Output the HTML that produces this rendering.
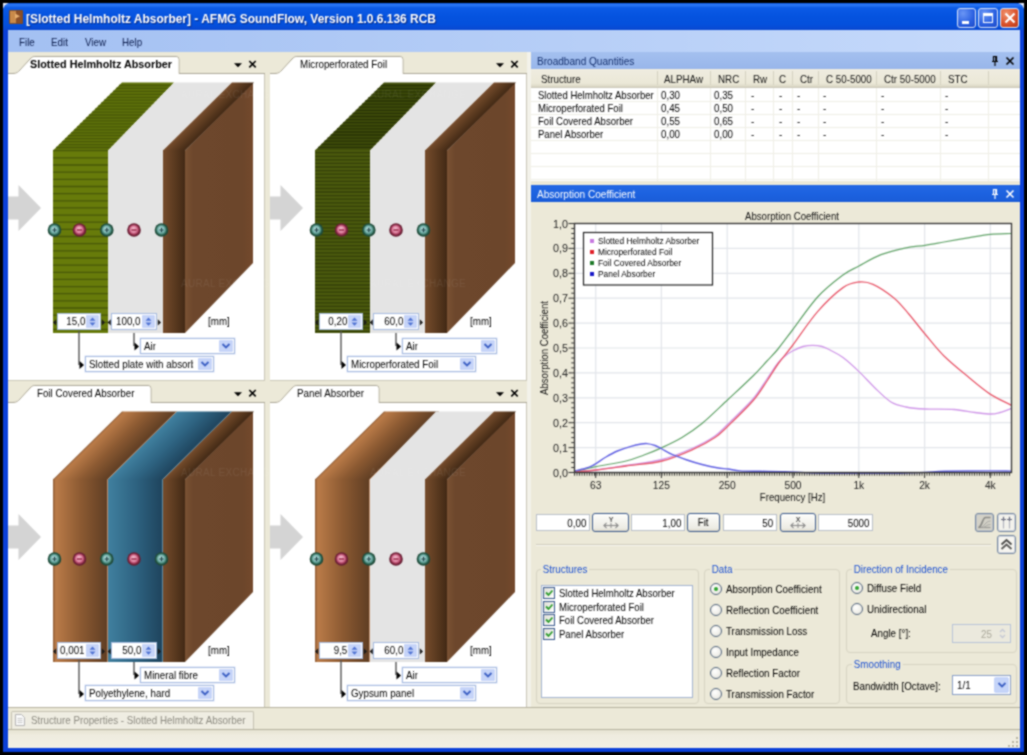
<!DOCTYPE html>
<html lang="en"><head><meta charset="utf-8"><title>AFMG SoundFlow</title>
<style>
*{box-sizing:border-box;margin:0;padding:0}
html,body{width:1027px;height:755px;overflow:hidden;background:#000}
body{position:relative;font-family:"Liberation Sans","DejaVu Sans",sans-serif;font-size:11px;color:#000;line-height:1}
#root{position:absolute;left:0;top:0;width:1027px;height:755px;overflow:hidden;background:#000;filter:url(#soft)}
.a{position:absolute}
.t{position:absolute;white-space:nowrap;line-height:12px;height:12px;transform-origin:0 50%;transform:scaleX(.89)}
.t.r{transform-origin:100% 50%}
#win{left:3px;top:3px;width:1021px;height:749px;background:#0a3fd8;border-radius:8px 8px 0 0;overflow:hidden}
#title{left:0;top:0;width:1021px;height:27px;background:linear-gradient(#0a5ae8 0,#2f7af5 7%,#0b5ae6 18%,#0553df 50%,#0450dc 80%,#0a48d0 100%)}
#ttext{left:23px;top:8px;font-weight:bold;font-size:13px;color:#fff;line-height:15px;height:15px;text-shadow:1px 1px 1px #0a2a80;transform:scaleX(.92)}
.wb{top:5px;width:20px;height:20px;border:1px solid #dfe8fb;border-radius:3px;background:radial-gradient(circle at 30% 25%,#6a96f5,#2a5fe0 60%,#1f4cc8)}
#menu{left:5px;top:27px;width:1012px;height:23px;background:linear-gradient(90deg,#a3c0f2,#c6dafb)}
#client{left:5px;top:49px;width:1012px;height:696px;background:#ece9d8}
.mi{top:6px;color:#0b1c4c}
.strip{background:#ece9d8;height:22px}
.doc{background:#fff}
.tabt{top:7px;line-height:12px}
.hdr{height:17px}
.hdr .t{top:3px;left:5.500px;transform:scaleX(.915)}
.sp{height:17px;background:#fff;border:1px solid #a6bbe0}
.sp .v{position:absolute;right:15px;top:1px;line-height:12px;font-size:11px;transform-origin:100% 50%;transform:scaleX(.89);white-space:nowrap}
.sp .b{position:absolute;right:1px;top:1px;width:13px;height:13px;background:#c6d4f8;border-radius:1px}
.cb{height:16px;background:#fff;border:1px solid #a6bbe0;box-shadow:0 0 0 .5px rgba(214,224,245,.9)}
.cb .v{position:absolute;left:3px;top:1px;line-height:12px;height:12px;font-size:11px;transform-origin:0 50%;transform:scaleX(.89);white-space:nowrap;overflow:hidden}
.cb .b{position:absolute;right:1px;top:1px;width:14px;height:12px;background:#c6d4f8;border-radius:1px}
.in{height:17px;background:#fff;border:1px solid #b9bfc9}
.in span{position:absolute;right:3px;top:2px;line-height:12px;font-size:11px;transform-origin:100% 50%;transform:scaleX(.89)}
.btn{height:19px;border:1px solid #3c5a8c;border-radius:3px;background:linear-gradient(#fdfdfb,#ecebe3 85%,#d8d4c6);text-align:center;line-height:16px;font-size:11px}
.gb{border:1px solid #d6d3c2;border-radius:4px}
.gl{color:#1a4fd0;background:#ece9d8;padding:0 2px;line-height:12px;height:12px;font-size:11px;white-space:nowrap;transform-origin:0 50%;transform:scaleX(.89)}
.rd{width:12px;height:12px;border-radius:50%;border:1px solid #52657d;background:radial-gradient(circle at 40% 35%,#fff,#e4e2d8)}
.rd.on::after{content:"";position:absolute;left:3px;top:3px;width:4px;height:4px;border-radius:50%;background:#2ea32e}
.ck{width:12px;height:12px;border:1px solid #38588c;background:linear-gradient(135deg,#dcdcd4,#fff)}
</style></head>
<body>
<div id="root">
<div class="a" style="left:3px;top:3px;width:6px;height:6px;background:#e8eefc"></div><div class="a" style="left:1018px;top:3px;width:6px;height:6px;background:#e8eefc"></div>
<div id="win" class="a">
<div id="title" class="a"><svg class="a" style="left:6px;top:7px" width="14" height="14" viewBox="0 0 14 16" preserveAspectRatio="none"><rect x="0" y="0" width="14" height="16" rx="1" fill="#7a4a2a"/><rect x="1" y="1" width="6" height="14" fill="#c98a4a"/><rect x="7" y="1" width="6" height="14" fill="#8a4f28"/><path d="M6 4l5 3-5 3z" fill="#e8b070"/></svg><div id="ttext" class="t">[Slotted Helmholtz Absorber] - AFMG SoundFlow, Version 1.0.6.136 RCB</div><div class="a wb" style="left:954px;width:19px"><div class="a" style="left:4px;top:12px;width:7px;height:3px;background:#fff"></div></div><div class="a wb" style="left:975px"><div class="a" style="left:4px;top:4px;width:10px;height:10px;border:1px solid #fff;border-top-width:3px"></div></div><div class="a wb" style="left:996.500px;width:19px;background:radial-gradient(circle at 30% 25%,#f0906a,#d8502a 60%,#b83a18)"><svg class="a" style="left:3px;top:3px" width="12" height="12" viewBox="0 0 12 12"><path d="M1.5 1.5l9 9M10.500 1.500l-9 9" stroke="#fff" stroke-width="2.200"/></svg></div></div>
<div id="menu" class="a"><div class="t mi" style="left:11px">File</div><div class="t mi" style="left:43px">Edit</div><div class="t mi" style="left:77px">View</div><div class="t mi" style="left:114px">Help</div></div>
<div id="client" class="a"></div>
</div>
<svg width="0" height="0" class="a"><defs>
<filter id="soft" x="0" y="0" width="1" height="1" color-interpolation-filters="sRGB"><feConvolveMatrix order="3" kernelMatrix="1 2 1 2 6 2 1 2 1" divisor="18" edgeMode="duplicate" preserveAlpha="true"/></filter>
<radialGradient id="gp" cx="0.500" cy="0.500" r="0.500" fx="0.450" fy="0.420"><stop offset="0" stop-color="#c8e8e4"/><stop offset="0.450" stop-color="#84bcb8"/><stop offset="0.700" stop-color="#3f7f70"/><stop offset="0.800" stop-color="#235240"/><stop offset="1" stop-color="#1d4636"/></radialGradient>
<radialGradient id="gm" cx="0.500" cy="0.500" r="0.500" fx="0.450" fy="0.420"><stop offset="0" stop-color="#f8ccda"/><stop offset="0.450" stop-color="#e088a4"/><stop offset="0.700" stop-color="#a83a5c"/><stop offset="0.800" stop-color="#74243a"/><stop offset="1" stop-color="#621c30"/></radialGradient>
<linearGradient id="cuF" x1="0" x2="1" y1="0" y2="0"><stop offset="0" stop-color="#8e5c36"/><stop offset="0.050" stop-color="#ba7b48"/><stop offset="0.500" stop-color="#8c5a32"/><stop offset="1" stop-color="#5e3d23"/></linearGradient>
<linearGradient id="cuT" x1="0" x2="1" y1="0" y2="0"><stop offset="0" stop-color="#b8743f"/><stop offset="0.500" stop-color="#a96a3a"/><stop offset="1" stop-color="#7c4a26"/></linearGradient>
<linearGradient id="blF" x1="0" x2="1" y1="0" y2="0"><stop offset="0" stop-color="#40809f"/><stop offset="0.500" stop-color="#2e6381"/><stop offset="1" stop-color="#1e435c"/></linearGradient>
<linearGradient id="blT" x1="0" x2="1" y1="0" y2="0"><stop offset="0" stop-color="#3a7796"/><stop offset="0.500" stop-color="#2f6785"/><stop offset="1" stop-color="#234e66"/></linearGradient>
<linearGradient id="brB" gradientUnits="userSpaceOnUse" x1="177" x2="245" y1="0" y2="0"><stop offset="0" stop-color="#7a5233"/><stop offset="0.120" stop-color="#6d472c"/><stop offset="0.850" stop-color="#6c462b"/><stop offset="1" stop-color="#74492c"/></linearGradient>
<linearGradient id="brS" gradientUnits="userSpaceOnUse" x1="155" x2="177" y1="0" y2="0"><stop offset="0" stop-color="#764c2c"/><stop offset="0.500" stop-color="#5c3b20"/><stop offset="1" stop-color="#422915"/></linearGradient>
<linearGradient id="brT" gradientUnits="userSpaceOnUse" x1="190" x2="206" y1="30" y2="46"><stop offset="0" stop-color="#7c5030"/><stop offset="0.5" stop-color="#66401f"/><stop offset="1" stop-color="#462a14"/></linearGradient>
</defs></svg>
<div class="a strip" style="left:8px;top:52px;width:257px;height:22px;"></div><div class="a doc" style="left:8px;top:74px;width:257px;height:306px;border-right:1px solid #c9c6b6;border-left:1px solid #fff"></div><svg class="a" style="left:8px;top:52px" width="257" height="23" viewBox="0 0 257 23"><path d="M0 21.500H5C9 21.500 10 20 12 18L22 7C24 5 25 4.500 28 4.500H168Q171 4.500 171 7.500V21.500H257" fill="none" stroke="#aca899" stroke-width="1"/><path d="M5 22C9 22 10 20.500 12.500 18L22.500 7.500C24 5.500 25.500 5 28 5H168Q170.5 5 170.5 7.500V23H0V22z" fill="#fff"/><path d="M226 11.200h8l-4 4z" fill="#000"/><path d="M241.300 9l6.400 6.400M247.700 9l-6.400 6.400" stroke="#000" stroke-width="1.600"/></svg><div class="t tabt" style="left:30px;top:58px;font-weight:bold;transform:scaleX(.983);">Slotted Helmholtz Absorber</div><svg class="a" style="left:8px;top:74px" width="257" height="306" viewBox="0 0 257 306"><path d="M45 76.5L114 8.5H166L100 76.5z" fill="#5f7209"/><rect x="45" y="75.9" width="55" height="183.1" fill="#677b0a"/><path d="M45 76.7H100M45 83.9H100M45 91.0H100M45 98.2H100M45 105.3H100M45 112.5H100M45 119.6H100M45 126.8H100M45 133.9H100M45 141.1H100M45 148.2H100M45 155.4H100M45 162.5H100M45 169.7H100M45 176.8H100M45 184.0H100M45 191.1H100M45 198.3H100M45 205.4H100M45 212.6H100M45 219.7H100M45 226.9H100M45 234.0H100M45 241.2H100M45 248.3H100M45 255.5H100" stroke="#485808" stroke-width="1.300" fill="none"/><path d="M48.0 73.5H102.9M51.0 70.6H105.7M54.0 67.6H108.6M57.0 64.7H111.5M60.0 61.7H114.3M63.0 58.8H117.2M66.0 55.8H120.1M69.0 52.8H123.0M72.0 49.9H125.8M75.0 46.9H128.7M78.0 44.0H131.6M81.0 41.0H134.4M84.0 38.1H137.3M87.0 35.1H140.2M90.0 32.2H143.0M93.0 29.2H145.9M96.0 26.2H148.8M99.0 23.3H151.7M102.0 20.3H154.5M105.0 17.4H157.4M108.0 14.4H160.3M111.0 11.5H163.1" stroke="#485808" stroke-width="1.300" fill="none"/><path d="M100 76.5L166 8.5H224L155 76.5V259H100z" fill="#e4e4e4"/><path d="M155 75.9H177V259H155z" fill="url(#brS)"/><path d="M177 76.5L245 8.5V189L177 259z" fill="url(#brB)"/><rect x="155" y="8.5" width="22" height="68.0" fill="url(#brS)" transform="translate(0,76.5) skewX(-45.42) translate(0,-76.5)"/><g transform="translate(0,111)"><path d="M0 11.500H10.500V0L33 23 10.500 46V34.500H0z" fill="#d4d4d4"/></g><circle cx="46.5" cy="156" r="6.800" fill="url(#gp)"/><path d="M44.3 156h4.400M46.5 153.8v4.400" stroke="#1d4348" stroke-width="1.200"/><circle cx="71.5" cy="156" r="6.800" fill="url(#gm)"/><path d="M68.9 156h5.200" stroke="#9a2a4a" stroke-width="1.500"/><circle cx="98.8" cy="156" r="6.800" fill="url(#gp)"/><path d="M96.6 156h4.400M98.8 153.8v4.400" stroke="#1d4348" stroke-width="1.200"/><circle cx="126" cy="156" r="6.800" fill="url(#gm)"/><path d="M123.4 156h5.200" stroke="#9a2a4a" stroke-width="1.500"/><circle cx="153.5" cy="156" r="6.800" fill="url(#gp)"/><path d="M151.3 156h4.400M153.5 153.8v4.400" stroke="#1d4348" stroke-width="1.200"/><path d="M71 257V291" stroke="#555" stroke-width="1.400" fill="none"/><path d="M71.500 287l4.500 4-4.500 4z" fill="#000"/><path d="M126 259V272" stroke="#555" stroke-width="1.400" fill="none"/><path d="M126.500 268.500l4.500 4-4.500 4z" fill="#000"/><path d="M48.200 245.300v6.200l-3.200-3.100zM93.800 245.300v6.200l3.200-3.100zM102.800 245.300v6.200l-3.200-3.100zM149.800 245.300v6.200l3.200-3.100z" fill="#1a1a1a"/></svg><div class="a sp" style="left:57px;top:313px;width:44px"><span class="v">15,0</span><span class="b"></span><svg class="a" style="right:2px;top:2px" width="11" height="11" viewBox="0 0 11 11"><path d="M2.500 4.700L5.500 1.500 8.500 4.700zM2.500 6.500L5.500 9.700 8.500 6.500z" fill="#4c70d2"/></svg></div><div class="a sp" style="left:111px;top:313px;width:46px"><span class="v">100,0</span><span class="b"></span><svg class="a" style="right:2px;top:2px" width="11" height="11" viewBox="0 0 11 11"><path d="M2.500 4.700L5.500 1.500 8.500 4.700zM2.500 6.500L5.500 9.700 8.500 6.500z" fill="#4c70d2"/></svg></div><div class="t" style="left:208px;top:315px">[mm]</div><div class="a cb" style="left:140px;top:338px;width:95px"><span class="v" style="">Air</span><span class="b"></span><svg class="a" style="right:3px;top:3px" width="10" height="8" viewBox="0 0 10 8"><path d="M1.500 2L5 5.500 8.500 2" fill="none" stroke="#3b5fc4" stroke-width="1.800"/></svg></div><div class="a cb" style="left:85px;top:356px;width:129px"><span class="v" style="width:117px;">Slotted plate with absorber</span><span class="b"></span><svg class="a" style="right:3px;top:3px" width="10" height="8" viewBox="0 0 10 8"><path d="M1.500 2L5 5.500 8.500 2" fill="none" stroke="#3b5fc4" stroke-width="1.800"/></svg></div>
<div class="a strip" style="left:270px;top:52px;width:257px;height:22px;"></div><div class="a doc" style="left:270px;top:74px;width:257px;height:306px;border-right:1px solid #c9c6b6;border-left:1px solid #fff"></div><svg class="a" style="left:270px;top:52px" width="257" height="23" viewBox="0 0 257 23"><path d="M0 21.500H5C9 21.500 10 20 12 18L22 7C24 5 25 4.500 28 4.500H130Q133 4.500 133 7.500V21.500H257" fill="none" stroke="#aca899" stroke-width="1"/><path d="M5 22C9 22 10 20.500 12.500 18L22.500 7.500C24 5.500 25.500 5 28 5H130Q132.5 5 132.5 7.500V23H0V22z" fill="#fff"/><path d="M226 11.200h8l-4 4z" fill="#000"/><path d="M241.300 9l6.400 6.400M247.700 9l-6.400 6.400" stroke="#000" stroke-width="1.600"/></svg><div class="t tabt" style="left:299.5px;top:58px;">Microperforated Foil</div><svg class="a" style="left:270px;top:74px" width="257" height="306" viewBox="0 0 257 306"><path d="M45 76.5L114 8.5H166L100 76.5z" fill="#3f4c0a"/><rect x="45" y="75.9" width="55" height="183.1" fill="#4b5a0d"/><path d="M45 78.7H100M45 82.3H100M45 85.9H100M45 89.4H100M45 93.0H100M45 96.6H100M45 100.2H100M45 103.7H100M45 107.3H100M45 110.9H100M45 114.5H100M45 118.0H100M45 121.6H100M45 125.2H100M45 128.8H100M45 132.3H100M45 135.9H100M45 139.5H100M45 143.0H100M45 146.6H100M45 150.2H100M45 153.8H100M45 157.3H100M45 160.9H100M45 164.5H100M45 168.1H100M45 171.6H100M45 175.2H100M45 178.8H100M45 182.4H100M45 185.9H100M45 189.5H100M45 193.1H100M45 196.7H100M45 200.2H100M45 203.8H100M45 207.4H100M45 211.0H100M45 214.5H100M45 218.1H100M45 221.7H100M45 225.3H100M45 228.8H100M45 232.4H100M45 236.0H100M45 239.6H100M45 243.1H100M45 246.7H100M45 250.3H100M45 253.9H100M45 257.4H100" stroke="#344008" stroke-width="1.300" fill="none"/><path d="M48.1 73.4H103.0M51.3 70.3H106.0M54.4 67.2H109.0M57.5 64.1H112.0M60.7 61.0H115.0M63.8 58.0H118.0M67.0 54.9H121.0M70.1 51.8H124.0M73.2 48.7H127.0M76.4 45.6H130.0M79.5 42.5H133.0M82.6 39.4H136.0M85.8 36.3H139.0M88.9 33.2H142.0M92.0 30.1H145.0M95.2 27.0H148.0M98.3 24.0H151.0M101.5 20.9H154.0M104.6 17.8H157.0M107.7 14.7H160.0M110.9 11.6H163.0" stroke="#273205" stroke-width="1.300" fill="none"/><path d="M100 76.5L166 8.5H224L155 76.5V259H100z" fill="#e4e4e4"/><path d="M155 75.9H177V259H155z" fill="url(#brS)"/><path d="M177 76.5L245 8.5V189L177 259z" fill="url(#brB)"/><rect x="155" y="8.5" width="22" height="68.0" fill="url(#brS)" transform="translate(0,76.5) skewX(-45.42) translate(0,-76.5)"/><g transform="translate(0,111)"><path d="M0 11.500H10.500V0L33 23 10.500 46V34.500H0z" fill="#d4d4d4"/></g><circle cx="46.5" cy="156" r="6.800" fill="url(#gp)"/><path d="M44.3 156h4.400M46.5 153.8v4.400" stroke="#1d4348" stroke-width="1.200"/><circle cx="71.5" cy="156" r="6.800" fill="url(#gm)"/><path d="M68.9 156h5.200" stroke="#9a2a4a" stroke-width="1.500"/><circle cx="98.8" cy="156" r="6.800" fill="url(#gp)"/><path d="M96.6 156h4.400M98.8 153.8v4.400" stroke="#1d4348" stroke-width="1.200"/><circle cx="126" cy="156" r="6.800" fill="url(#gm)"/><path d="M123.4 156h5.200" stroke="#9a2a4a" stroke-width="1.500"/><circle cx="153.5" cy="156" r="6.800" fill="url(#gp)"/><path d="M151.3 156h4.400M153.5 153.8v4.400" stroke="#1d4348" stroke-width="1.200"/><path d="M71 257V291" stroke="#555" stroke-width="1.400" fill="none"/><path d="M71.500 287l4.500 4-4.500 4z" fill="#000"/><path d="M126 259V272" stroke="#555" stroke-width="1.400" fill="none"/><path d="M126.500 268.500l4.500 4-4.500 4z" fill="#000"/><path d="M48.200 245.300v6.200l-3.200-3.100zM93.800 245.300v6.200l3.200-3.100zM102.800 245.300v6.200l-3.200-3.100zM149.800 245.300v6.200l3.200-3.100z" fill="#1a1a1a"/></svg><div class="a sp" style="left:319px;top:313px;width:44px"><span class="v">0,20</span><span class="b"></span><svg class="a" style="right:2px;top:2px" width="11" height="11" viewBox="0 0 11 11"><path d="M2.500 4.700L5.500 1.500 8.500 4.700zM2.500 6.500L5.500 9.700 8.500 6.500z" fill="#4c70d2"/></svg></div><div class="a sp" style="left:373px;top:313px;width:46px"><span class="v">60,0</span><span class="b"></span><svg class="a" style="right:2px;top:2px" width="11" height="11" viewBox="0 0 11 11"><path d="M2.500 4.700L5.500 1.500 8.500 4.700zM2.500 6.500L5.500 9.700 8.500 6.500z" fill="#4c70d2"/></svg></div><div class="t" style="left:470px;top:315px">[mm]</div><div class="a cb" style="left:402px;top:338px;width:95px"><span class="v" style="">Air</span><span class="b"></span><svg class="a" style="right:3px;top:3px" width="10" height="8" viewBox="0 0 10 8"><path d="M1.500 2L5 5.500 8.500 2" fill="none" stroke="#3b5fc4" stroke-width="1.800"/></svg></div><div class="a cb" style="left:347px;top:356px;width:129px"><span class="v" style="">Microperforated Foil</span><span class="b"></span><svg class="a" style="right:3px;top:3px" width="10" height="8" viewBox="0 0 10 8"><path d="M1.500 2L5 5.500 8.500 2" fill="none" stroke="#3b5fc4" stroke-width="1.800"/></svg></div>
<div class="a strip" style="left:8px;top:380px;width:257px;height:23px;border-top:1px solid #cbc8b8;"></div><div class="a doc" style="left:8px;top:403px;width:257px;height:304px;border-right:1px solid #c9c6b6;border-left:1px solid #fff"></div><svg class="a" style="left:8px;top:381px" width="257" height="23" viewBox="0 0 257 23"><path d="M0 21.500H5C9 21.500 10 20 12 18L22 7C24 5 25 4.500 28 4.500H140Q143 4.500 143 7.500V21.500H257" fill="none" stroke="#aca899" stroke-width="1"/><path d="M5 22C9 22 10 20.500 12.500 18L22.500 7.500C24 5.500 25.500 5 28 5H140Q142.5 5 142.5 7.500V23H0V22z" fill="#fff"/><path d="M226 11.200h8l-4 4z" fill="#000"/><path d="M241.300 9l6.400 6.400M247.700 9l-6.400 6.400" stroke="#000" stroke-width="1.600"/></svg><div class="t tabt" style="left:37px;top:387px;">Foil Covered Absorber</div><svg class="a" style="left:8px;top:403px" width="257" height="304" viewBox="0 0 257 304"><rect x="45" y="8.5" width="55" height="68.0" fill="url(#cuF)" transform="translate(0,76.5) skewX(-45.42) translate(0,-76.5)"/><rect x="45" y="75.9" width="55" height="183.1" fill="url(#cuF)"/><path d="M99.5 259V76.5L168.5 8.5" stroke="#d9a27a" stroke-width="1" fill="none" opacity="0.800"/><rect x="100" y="8.5" width="55" height="68.0" fill="url(#blF)" transform="translate(0,76.5) skewX(-45.42) translate(0,-76.5)"/><rect x="100" y="75.9" width="55" height="183.1" fill="url(#blF)"/><path d="M154.5 259V76.5L223.5 8.5" stroke="#6fa3bd" stroke-width="1" fill="none" opacity="0.800"/><path d="M155 75.9H177V259H155z" fill="url(#brS)"/><path d="M177 76.5L245 8.5V189L177 259z" fill="url(#brB)"/><rect x="155" y="8.5" width="22" height="68.0" fill="url(#brS)" transform="translate(0,76.5) skewX(-45.42) translate(0,-76.5)"/><g transform="translate(0,111)"><path d="M0 11.500H10.500V0L33 23 10.500 46V34.500H0z" fill="#d4d4d4"/></g><circle cx="46.5" cy="156" r="6.800" fill="url(#gp)"/><path d="M44.3 156h4.400M46.5 153.8v4.400" stroke="#1d4348" stroke-width="1.200"/><circle cx="71.5" cy="156" r="6.800" fill="url(#gm)"/><path d="M68.9 156h5.200" stroke="#9a2a4a" stroke-width="1.500"/><circle cx="98.8" cy="156" r="6.800" fill="url(#gp)"/><path d="M96.6 156h4.400M98.8 153.8v4.400" stroke="#1d4348" stroke-width="1.200"/><circle cx="126" cy="156" r="6.800" fill="url(#gm)"/><path d="M123.4 156h5.200" stroke="#9a2a4a" stroke-width="1.500"/><circle cx="153.5" cy="156" r="6.800" fill="url(#gp)"/><path d="M151.3 156h4.400M153.5 153.8v4.400" stroke="#1d4348" stroke-width="1.200"/><path d="M71 257V291" stroke="#555" stroke-width="1.400" fill="none"/><path d="M71.500 287l4.500 4-4.500 4z" fill="#000"/><path d="M126 259V272" stroke="#555" stroke-width="1.400" fill="none"/><path d="M126.500 268.500l4.500 4-4.500 4z" fill="#000"/><path d="M48.200 245.300v6.200l-3.200-3.100zM93.800 245.300v6.200l3.200-3.100zM102.800 245.300v6.200l-3.200-3.100zM149.800 245.300v6.200l3.200-3.100z" fill="#1a1a1a"/></svg><div class="a sp" style="left:57px;top:642px;width:44px"><span class="v">0,001</span><span class="b"></span><svg class="a" style="right:2px;top:2px" width="11" height="11" viewBox="0 0 11 11"><path d="M2.500 4.700L5.500 1.500 8.500 4.700zM2.500 6.500L5.500 9.700 8.500 6.500z" fill="#4c70d2"/></svg></div><div class="a sp" style="left:111px;top:642px;width:46px"><span class="v">50,0</span><span class="b"></span><svg class="a" style="right:2px;top:2px" width="11" height="11" viewBox="0 0 11 11"><path d="M2.500 4.700L5.500 1.500 8.500 4.700zM2.500 6.500L5.500 9.700 8.500 6.500z" fill="#4c70d2"/></svg></div><div class="t" style="left:208px;top:644px">[mm]</div><div class="a cb" style="left:140px;top:667px;width:95px"><span class="v" style="">Mineral fibre</span><span class="b"></span><svg class="a" style="right:3px;top:3px" width="10" height="8" viewBox="0 0 10 8"><path d="M1.500 2L5 5.500 8.500 2" fill="none" stroke="#3b5fc4" stroke-width="1.800"/></svg></div><div class="a cb" style="left:85px;top:685px;width:129px"><span class="v" style="">Polyethylene, hard</span><span class="b"></span><svg class="a" style="right:3px;top:3px" width="10" height="8" viewBox="0 0 10 8"><path d="M1.500 2L5 5.500 8.500 2" fill="none" stroke="#3b5fc4" stroke-width="1.800"/></svg></div>
<div class="a strip" style="left:270px;top:380px;width:257px;height:23px;border-top:1px solid #cbc8b8;"></div><div class="a doc" style="left:270px;top:403px;width:257px;height:304px;border-right:1px solid #c9c6b6;border-left:1px solid #fff"></div><svg class="a" style="left:270px;top:381px" width="257" height="23" viewBox="0 0 257 23"><path d="M0 21.500H5C9 21.500 10 20 12 18L22 7C24 5 25 4.500 28 4.500H106Q109 4.500 109 7.500V21.500H257" fill="none" stroke="#aca899" stroke-width="1"/><path d="M5 22C9 22 10 20.500 12.500 18L22.500 7.500C24 5.500 25.500 5 28 5H106Q108.5 5 108.5 7.500V23H0V22z" fill="#fff"/><path d="M226 11.200h8l-4 4z" fill="#000"/><path d="M241.300 9l6.400 6.400M247.700 9l-6.400 6.400" stroke="#000" stroke-width="1.600"/></svg><div class="t tabt" style="left:297px;top:387px;">Panel Absorber</div><svg class="a" style="left:270px;top:403px" width="257" height="304" viewBox="0 0 257 304"><rect x="45" y="8.5" width="55" height="68.0" fill="url(#cuF)" transform="translate(0,76.5) skewX(-45.42) translate(0,-76.5)"/><rect x="45" y="75.9" width="55" height="183.1" fill="url(#cuF)"/><path d="M99.5 259V76.5L168.5 8.5" stroke="#d9a27a" stroke-width="1" fill="none" opacity="0.800"/><path d="M100 76.5L166 8.5H224L155 76.5V259H100z" fill="#e4e4e4"/><path d="M155 75.9H177V259H155z" fill="url(#brS)"/><path d="M177 76.5L245 8.5V189L177 259z" fill="url(#brB)"/><rect x="155" y="8.5" width="22" height="68.0" fill="url(#brS)" transform="translate(0,76.5) skewX(-45.42) translate(0,-76.5)"/><g transform="translate(0,111)"><path d="M0 11.500H10.500V0L33 23 10.500 46V34.500H0z" fill="#d4d4d4"/></g><circle cx="46.5" cy="156" r="6.800" fill="url(#gp)"/><path d="M44.3 156h4.400M46.5 153.8v4.400" stroke="#1d4348" stroke-width="1.200"/><circle cx="71.5" cy="156" r="6.800" fill="url(#gm)"/><path d="M68.9 156h5.200" stroke="#9a2a4a" stroke-width="1.500"/><circle cx="98.8" cy="156" r="6.800" fill="url(#gp)"/><path d="M96.6 156h4.400M98.8 153.8v4.400" stroke="#1d4348" stroke-width="1.200"/><circle cx="126" cy="156" r="6.800" fill="url(#gm)"/><path d="M123.4 156h5.200" stroke="#9a2a4a" stroke-width="1.500"/><circle cx="153.5" cy="156" r="6.800" fill="url(#gp)"/><path d="M151.3 156h4.400M153.5 153.8v4.400" stroke="#1d4348" stroke-width="1.200"/><path d="M71 257V291" stroke="#555" stroke-width="1.400" fill="none"/><path d="M71.500 287l4.500 4-4.500 4z" fill="#000"/><path d="M126 259V272" stroke="#555" stroke-width="1.400" fill="none"/><path d="M126.500 268.500l4.500 4-4.500 4z" fill="#000"/><path d="M48.200 245.300v6.200l-3.200-3.100zM93.800 245.300v6.200l3.200-3.100zM102.800 245.300v6.200l-3.200-3.100zM149.800 245.300v6.200l3.200-3.100z" fill="#1a1a1a"/></svg><div class="a sp" style="left:319px;top:642px;width:44px"><span class="v">9,5</span><span class="b"></span><svg class="a" style="right:2px;top:2px" width="11" height="11" viewBox="0 0 11 11"><path d="M2.500 4.700L5.500 1.500 8.500 4.700zM2.500 6.500L5.500 9.700 8.500 6.500z" fill="#4c70d2"/></svg></div><div class="a sp" style="left:373px;top:642px;width:46px"><span class="v">60,0</span><span class="b"></span><svg class="a" style="right:2px;top:2px" width="11" height="11" viewBox="0 0 11 11"><path d="M2.500 4.700L5.500 1.500 8.500 4.700zM2.500 6.500L5.500 9.700 8.500 6.500z" fill="#4c70d2"/></svg></div><div class="t" style="left:470px;top:644px">[mm]</div><div class="a cb" style="left:402px;top:667px;width:95px"><span class="v" style="">Air</span><span class="b"></span><svg class="a" style="right:3px;top:3px" width="10" height="8" viewBox="0 0 10 8"><path d="M1.500 2L5 5.500 8.500 2" fill="none" stroke="#3b5fc4" stroke-width="1.800"/></svg></div><div class="a cb" style="left:347px;top:685px;width:129px"><span class="v" style="">Gypsum panel</span><span class="b"></span><svg class="a" style="right:3px;top:3px" width="10" height="8" viewBox="0 0 10 8"><path d="M1.500 2L5 5.500 8.500 2" fill="none" stroke="#3b5fc4" stroke-width="1.800"/></svg></div>
<div class="t" style="left:181px;top:89px;font-size:10px;color:rgba(255,255,255,.075);letter-spacing:.3px;transform:none;pointer-events:none">AURAL EXCHANGE</div><div class="t" style="left:370px;top:89px;font-size:10px;color:rgba(255,255,255,.075);letter-spacing:.3px;transform:none;pointer-events:none">AURAL EXCHANGE</div><div class="t" style="left:181px;top:278px;font-size:10px;color:rgba(255,255,255,.075);letter-spacing:.3px;transform:none;pointer-events:none">AURAL EXCHANGE</div><div class="t" style="left:370px;top:278px;font-size:10px;color:rgba(255,255,255,.075);letter-spacing:.3px;transform:none;pointer-events:none">AURAL EXCHANGE</div><div class="t" style="left:181px;top:467px;font-size:10px;color:rgba(255,255,255,.075);letter-spacing:.3px;transform:none;pointer-events:none">AURAL EXCHANGE</div><div class="t" style="left:370px;top:467px;font-size:10px;color:rgba(255,255,255,.075);letter-spacing:.3px;transform:none;pointer-events:none">AURAL EXCHANGE</div>
<div class="a hdr" style="left:531px;top:52px;width:489px;background:linear-gradient(#a4c0ef,#98b6ea)"><div class="t" style="color:#15306e">Broadband Quantities</div><svg class="a" style="left:459px;top:3px" width="26" height="12" viewBox="0 0 26 12"><path d="M2 6.500h6M3.500 6V1.500h3V6M5 6.500V11" stroke="#000" stroke-width="1.200" fill="none"/><path d="M6 1.500V6" stroke="#000" stroke-width="1.600"/><path d="M16.500 2.500l7 7M23.500 2.500l-7 7" stroke="#000" stroke-width="1.600"/></svg></div><div class="a" style="left:531px;top:69px;width:489px;height:112px;background:#fff"></div><div class="a" style="left:531px;top:69px;width:489px;height:19px;background:linear-gradient(#efece0,#ebe8d7 80%,#d8d4c2);border-bottom:1px solid #cbc7b8"></div><svg class="a" style="left:531px;top:69px" width="489" height="112" viewBox="531 69 489 112"><path d="M657.5 88V181M710.5 88V181M745.5 88V181M773.5 88V181M792.5 88V181M818.5 88V181M876.5 88V181M940.5 88V181M988.5 88V181M531 101.5H1020M531 114.5H1020M531 127.5H1020M531 140.5H1020M531 153.5H1020M531 166.5H1020M531 179.5H1020" stroke="#efeee6" stroke-width="1" fill="none"/><path d="M657.5 71V85M710.5 71V85M745.5 71V85M773.5 71V85M792.5 71V85M818.5 71V85M876.5 71V85M940.5 71V85M988.5 71V85" stroke="#d4d1c0" stroke-width="1" fill="none"/></svg><div class="t" style="left:541px;top:73px;color:#111">Structure</div><div class="t" style="left:664px;top:73px;color:#111">ALPHAw</div><div class="t" style="left:718px;top:73px;color:#111">NRC</div><div class="t" style="left:753px;top:73px;color:#111">Rw</div><div class="t" style="left:779px;top:73px;color:#111">C</div><div class="t" style="left:800px;top:73px;color:#111">Ctr</div><div class="t" style="left:826px;top:73px;color:#111">C 50-5000</div><div class="t" style="left:884px;top:73px;color:#111">Ctr 50-5000</div><div class="t" style="left:948px;top:73px;color:#111">STC</div><div class="t" style="left:538px;top:89px;transform:scaleX(.868)">Slotted Helmholtz Absorber</div><div class="t" style="left:661px;top:89px">0,30</div><div class="t" style="left:714px;top:89px">0,35</div><div class="t" style="left:751px;top:89px">-</div><div class="t" style="left:779px;top:89px">-</div><div class="t" style="left:797px;top:89px">-</div><div class="t" style="left:823px;top:89px">-</div><div class="t" style="left:881px;top:89px">-</div><div class="t" style="left:945px;top:89px">-</div><div class="t" style="left:538px;top:102px;transform:scaleX(.868)">Microperforated Foil</div><div class="t" style="left:661px;top:102px">0,45</div><div class="t" style="left:714px;top:102px">0,50</div><div class="t" style="left:751px;top:102px">-</div><div class="t" style="left:779px;top:102px">-</div><div class="t" style="left:797px;top:102px">-</div><div class="t" style="left:823px;top:102px">-</div><div class="t" style="left:881px;top:102px">-</div><div class="t" style="left:945px;top:102px">-</div><div class="t" style="left:538px;top:115px;transform:scaleX(.868)">Foil Covered Absorber</div><div class="t" style="left:661px;top:115px">0,55</div><div class="t" style="left:714px;top:115px">0,65</div><div class="t" style="left:751px;top:115px">-</div><div class="t" style="left:779px;top:115px">-</div><div class="t" style="left:797px;top:115px">-</div><div class="t" style="left:823px;top:115px">-</div><div class="t" style="left:881px;top:115px">-</div><div class="t" style="left:945px;top:115px">-</div><div class="t" style="left:538px;top:128px;transform:scaleX(.868)">Panel Absorber</div><div class="t" style="left:661px;top:128px">0,00</div><div class="t" style="left:714px;top:128px">0,00</div><div class="t" style="left:751px;top:128px">-</div><div class="t" style="left:779px;top:128px">-</div><div class="t" style="left:797px;top:128px">-</div><div class="t" style="left:823px;top:128px">-</div><div class="t" style="left:881px;top:128px">-</div><div class="t" style="left:945px;top:128px">-</div>
<div class="a hdr" style="left:531px;top:185px;width:489px;background:linear-gradient(#2468e4,#1c62e0 50%,#1a5cd8)"><div class="t" style="color:#fff">Absorption Coefficient</div><svg class="a" style="left:459px;top:3px" width="26" height="12" viewBox="0 0 26 12"><path d="M2 6.500h6M3.500 6V1.500h3V6M5 6.500V11" stroke="#fff" stroke-width="1.200" fill="none"/><path d="M6 1.500V6" stroke="#fff" stroke-width="1.600"/><path d="M16.500 2.500l7 7M23.500 2.500l-7 7" stroke="#fff" stroke-width="1.600"/></svg></div><svg class="a" style="left:531px;top:202px" width="489" height="305" viewBox="531 202 489 305" font-family="Liberation Sans, sans-serif"><rect x="574.5" y="223.5" width="437.0" height="249.0" fill="#fff"/><path d="M595.7 223.5V472.5M661.4 223.5V472.5M727.2 223.5V472.5M793.0 223.5V472.5M858.8 223.5V472.5M924.6 223.5V472.5M990.3 223.5V472.5M574.5 447.6H1011.5M574.5 422.7H1011.5M574.5 397.8H1011.5M574.5 372.9H1011.5M574.5 348.0H1011.5M574.5 323.1H1011.5M574.5 298.2H1011.5M574.5 273.3H1011.5M574.5 248.4H1011.5" stroke="#e2e5ea" stroke-width="1.200" fill="none"/><path d="M574.5 472.0C578.1 471.7 587.4 471.1 596.0 470.0C604.6 468.9 615.0 467.2 626.0 465.5C637.0 463.8 650.8 462.4 662.0 459.5C673.2 456.6 684.2 451.9 693.0 448.0C701.8 444.1 709.2 440.0 715.0 436.0C720.8 432.0 721.7 430.2 728.0 424.0C734.3 417.8 746.5 406.5 753.0 399.0C759.5 391.5 762.8 385.0 767.0 379.0C771.2 373.0 775.0 366.8 778.0 363.0C781.0 359.2 782.6 358.0 785.0 356.0C787.4 354.0 789.5 352.6 792.5 351.0C795.5 349.4 799.6 347.4 803.0 346.5C806.4 345.6 809.4 345.3 812.6 345.3C815.8 345.3 819.1 345.7 822.0 346.5C824.9 347.3 826.5 348.2 830.0 350.0C833.5 351.8 838.2 353.9 843.0 357.5C847.8 361.1 853.7 366.5 859.0 371.6C864.3 376.7 869.7 382.9 875.0 388.0C880.3 393.1 885.8 398.8 891.0 402.0C896.2 405.2 900.3 405.8 906.0 407.0C911.7 408.2 917.0 408.6 925.0 409.0C933.0 409.4 945.7 408.9 954.0 409.5C962.3 410.1 968.9 411.8 975.0 412.5C981.1 413.2 986.3 414.0 990.5 414.0C994.7 414.0 996.5 413.4 1000.0 412.5C1003.5 411.6 1009.6 409.1 1011.5 408.4" stroke="#cf97e8" stroke-width="1.300" fill="none"/><path d="M574.5 471.5C578.1 470.7 587.4 468.4 596.0 466.6C604.6 464.9 618.0 462.9 626.0 461.0C634.0 459.1 638.0 457.2 644.0 455.0C650.0 452.8 655.7 450.5 662.0 447.6C668.3 444.7 675.3 441.5 682.0 437.5C688.7 433.5 694.3 429.8 702.0 423.5C709.7 417.2 719.5 407.4 728.0 399.5C736.5 391.6 746.5 382.4 753.0 376.0C759.5 369.6 762.8 365.5 767.0 361.0C771.2 356.5 773.8 354.2 778.0 349.0C782.2 343.8 785.9 338.7 792.5 330.0C799.1 321.3 809.2 306.2 817.6 297.0C826.0 287.8 836.1 280.2 843.0 275.0C849.9 269.8 852.7 269.4 859.0 266.0C865.3 262.6 873.2 257.7 881.0 254.7C888.8 251.7 898.7 249.4 906.0 247.8C913.3 246.2 918.7 246.3 925.0 245.3C931.3 244.3 936.6 243.3 944.0 242.0C951.4 240.7 961.8 239.0 969.5 237.7C977.2 236.4 983.5 235.1 990.5 234.4C997.5 233.7 1008.0 233.7 1011.5 233.5" stroke="#62a369" stroke-width="1.250" fill="none"/><path d="M574.5 472.0C578.1 471.7 587.4 471.0 596.0 470.0C604.6 469.0 615.0 467.5 626.0 466.0C637.0 464.5 650.8 463.8 662.0 461.0C673.2 458.2 684.2 453.3 693.0 449.4C701.8 445.5 709.2 441.4 715.0 437.5C720.8 433.6 721.7 432.1 728.0 426.0C734.3 419.9 746.5 408.3 753.0 400.8C759.5 393.3 762.8 387.1 767.0 381.0C771.2 374.9 773.8 369.9 778.0 364.0C782.2 358.1 785.9 354.2 792.5 345.5C799.1 336.8 809.2 321.2 817.6 311.6C826.0 302.0 836.1 292.5 843.0 287.6C849.9 282.7 854.0 282.6 859.0 282.0C864.0 281.4 867.2 281.7 873.0 284.3C878.8 286.9 887.6 292.8 893.6 297.7C899.6 302.6 903.6 307.9 908.8 314.0C914.0 320.1 919.1 327.0 925.0 334.0C930.9 341.0 936.6 348.7 944.0 356.0C951.4 363.3 961.8 371.6 969.5 378.0C977.2 384.4 983.5 389.8 990.5 394.4C997.5 398.9 1008.0 403.5 1011.5 405.3" stroke="#e85a6c" stroke-width="1.300" fill="none"/><path d="M574.5 471.0C576.2 470.6 581.9 469.4 585.0 468.5C588.1 467.6 589.5 467.2 593.0 465.3C596.5 463.4 601.9 459.4 606.0 457.0C610.1 454.6 613.2 452.8 617.4 451.0C621.6 449.2 627.2 447.4 631.0 446.3C634.8 445.2 637.3 444.6 640.0 444.2C642.7 443.8 644.5 443.4 647.0 443.6C649.5 443.8 652.5 444.6 655.0 445.5C657.5 446.4 659.2 447.5 662.0 449.0C664.8 450.5 667.8 452.6 672.0 454.4C676.2 456.2 682.0 458.3 687.0 460.0C692.0 461.7 697.0 463.2 702.0 464.5C707.0 465.8 712.7 467.1 717.0 467.8C721.3 468.6 724.2 468.5 728.0 469.0C731.8 469.5 734.7 470.5 740.0 470.9C745.3 471.3 752.5 471.2 760.0 471.3C767.5 471.4 777.5 471.4 785.0 471.6C792.5 471.8 797.5 472.3 805.0 472.6C812.5 472.9 814.2 473.1 830.0 473.2C845.8 473.3 884.2 473.3 900.0 473.2C915.8 473.1 917.5 472.7 925.0 472.4C932.5 472.1 934.2 471.6 945.0 471.3C955.8 471.1 978.9 470.9 990.0 470.9C1001.1 470.9 1007.9 471.1 1011.5 471.1" stroke="#6060e2" stroke-width="1.400" fill="none"/><rect x="574.5" y="223.5" width="437.0" height="249.0" fill="none" stroke="#333" stroke-width="1.300"/><path d="M568.5 472.5H574.5M571.3 467.5H574.5M571.3 462.5H574.5M571.3 457.6H574.5M571.3 452.6H574.5M568.5 447.6H574.5M571.3 442.6H574.5M571.3 437.6H574.5M571.3 432.7H574.5M571.3 427.7H574.5M568.5 422.7H574.5M571.3 417.7H574.5M571.3 412.7H574.5M571.3 407.8H574.5M571.3 402.8H574.5M568.5 397.8H574.5M571.3 392.8H574.5M571.3 387.8H574.5M571.3 382.9H574.5M571.3 377.9H574.5M568.5 372.9H574.5M571.3 367.9H574.5M571.3 362.9H574.5M571.3 358.0H574.5M571.3 353.0H574.5M568.5 348.0H574.5M571.3 343.0H574.5M571.3 338.0H574.5M571.3 333.1H574.5M571.3 328.1H574.5M568.5 323.1H574.5M571.3 318.1H574.5M571.3 313.1H574.5M571.3 308.2H574.5M571.3 303.2H574.5M568.5 298.2H574.5M571.3 293.2H574.5M571.3 288.2H574.5M571.3 283.3H574.5M571.3 278.3H574.5M568.5 273.3H574.5M571.3 268.3H574.5M571.3 263.3H574.5M571.3 258.4H574.5M571.3 253.4H574.5M568.5 248.4H574.5M571.3 243.4H574.5M571.3 238.4H574.5M571.3 233.5H574.5M571.3 228.5H574.5M568.5 223.5H574.5M574.5 472.5V475.7M577.0 472.5V475.7M579.5 472.5V475.7M582.0 472.5V475.7M584.5 472.5V475.7M587.0 472.5V475.7M589.5 472.5V475.7M592.0 472.5V475.7M594.5 472.5V475.7M597.0 472.5V475.7M599.5 472.5V475.7M602.0 472.5V475.7M604.5 472.5V475.7M607.0 472.5V475.7M609.5 472.5V475.7M612.0 472.5V475.7M614.5 472.5V475.7M617.0 472.5V475.7M619.5 472.5V475.7M622.0 472.5V475.7M624.5 472.5V475.7M627.0 472.5V475.7M629.5 472.5V475.7M632.0 472.5V475.7M634.5 472.5V475.7M637.0 472.5V475.7M639.5 472.5V475.7M642.0 472.5V475.7M644.5 472.5V475.7M647.0 472.5V475.7M649.5 472.5V475.7M652.0 472.5V475.7M654.5 472.5V475.7M657.0 472.5V475.7M659.5 472.5V475.7M662.0 472.5V475.7M664.5 472.5V475.7M667.0 472.5V475.7M669.5 472.5V475.7M672.0 472.5V475.7M674.5 472.5V475.7M677.0 472.5V475.7M679.5 472.5V475.7M682.0 472.5V475.7M684.5 472.5V475.7M687.0 472.5V475.7M689.5 472.5V475.7M692.0 472.5V475.7M694.5 472.5V475.7M697.0 472.5V475.7M699.5 472.5V475.7M702.0 472.5V475.7M704.5 472.5V475.7M707.0 472.5V475.7M709.5 472.5V475.7M712.0 472.5V475.7M714.5 472.5V475.7M717.0 472.5V475.7M719.5 472.5V475.7M722.0 472.5V475.7M724.5 472.5V475.7M727.0 472.5V475.7M729.5 472.5V475.7M732.0 472.5V475.7M734.5 472.5V475.7M737.0 472.5V475.7M739.5 472.5V475.7M742.0 472.5V475.7M744.5 472.5V475.7M747.0 472.5V475.7M749.5 472.5V475.7M752.0 472.5V475.7M754.5 472.5V475.7M757.0 472.5V475.7M759.5 472.5V475.7M762.0 472.5V475.7M764.5 472.5V475.7M767.0 472.5V475.7M769.5 472.5V475.7M772.0 472.5V475.7M774.5 472.5V475.7M777.0 472.5V475.7M779.5 472.5V475.7M782.0 472.5V475.7M784.5 472.5V475.7M787.0 472.5V475.7M789.5 472.5V475.7M792.0 472.5V475.7M794.5 472.5V475.7M797.0 472.5V475.7M799.5 472.5V475.7M802.0 472.5V475.7M804.5 472.5V475.7M807.0 472.5V475.7M809.5 472.5V475.7M812.0 472.5V475.7M814.5 472.5V475.7M817.0 472.5V475.7M819.5 472.5V475.7M822.0 472.5V475.7M824.5 472.5V475.7M827.0 472.5V475.7M829.5 472.5V475.7M832.0 472.5V475.7M834.5 472.5V475.7M837.0 472.5V475.7M839.5 472.5V475.7M842.0 472.5V475.7M844.5 472.5V475.7M847.0 472.5V475.7M849.5 472.5V475.7M852.0 472.5V475.7M854.5 472.5V475.7M857.0 472.5V475.7M859.5 472.5V475.7M862.0 472.5V475.7M864.5 472.5V475.7M867.0 472.5V475.7M869.5 472.5V475.7M872.0 472.5V475.7M874.5 472.5V475.7M877.0 472.5V475.7M879.5 472.5V475.7M882.0 472.5V475.7M884.5 472.5V475.7M887.0 472.5V475.7M889.5 472.5V475.7M892.0 472.5V475.7M894.5 472.5V475.7M897.0 472.5V475.7M899.5 472.5V475.7M902.0 472.5V475.7M904.5 472.5V475.7M907.0 472.5V475.7M909.5 472.5V475.7M912.0 472.5V475.7M914.5 472.5V475.7M917.0 472.5V475.7M919.5 472.5V475.7M922.0 472.5V475.7M924.5 472.5V475.7M927.0 472.5V475.7M929.5 472.5V475.7M932.0 472.5V475.7M934.5 472.5V475.7M937.0 472.5V475.7M939.5 472.5V475.7M942.0 472.5V475.7M944.5 472.5V475.7M947.0 472.5V475.7M949.5 472.5V475.7M952.0 472.5V475.7M954.5 472.5V475.7M957.0 472.5V475.7M959.5 472.5V475.7M962.0 472.5V475.7M964.5 472.5V475.7M967.0 472.5V475.7M969.5 472.5V475.7M972.0 472.5V475.7M974.5 472.5V475.7M977.0 472.5V475.7M979.5 472.5V475.7M982.0 472.5V475.7M984.5 472.5V475.7M987.0 472.5V475.7M989.5 472.5V475.7M992.0 472.5V475.7M994.5 472.5V475.7M997.0 472.5V475.7M999.5 472.5V475.7M1002.0 472.5V475.7M1004.5 472.5V475.7M1007.0 472.5V475.7M1009.5 472.5V475.7M595.7 472.5V478.0M661.4 472.5V478.0M727.2 472.5V478.0M793.0 472.5V478.0M858.8 472.5V478.0M924.6 472.5V478.0M990.3 472.5V478.0" stroke="#333" stroke-width="1" fill="none"/><text x="568" y="476.5" font-size="11.5" text-anchor="end" fill="#222" textLength="15.0" lengthAdjust="spacingAndGlyphs">0,0</text><text x="568" y="451.6" font-size="11.5" text-anchor="end" fill="#222" textLength="15.0" lengthAdjust="spacingAndGlyphs">0,1</text><text x="568" y="426.7" font-size="11.5" text-anchor="end" fill="#222" textLength="15.0" lengthAdjust="spacingAndGlyphs">0,2</text><text x="568" y="401.8" font-size="11.5" text-anchor="end" fill="#222" textLength="15.0" lengthAdjust="spacingAndGlyphs">0,3</text><text x="568" y="376.9" font-size="11.5" text-anchor="end" fill="#222" textLength="15.0" lengthAdjust="spacingAndGlyphs">0,4</text><text x="568" y="352.0" font-size="11.5" text-anchor="end" fill="#222" textLength="15.0" lengthAdjust="spacingAndGlyphs">0,5</text><text x="568" y="327.1" font-size="11.5" text-anchor="end" fill="#222" textLength="15.0" lengthAdjust="spacingAndGlyphs">0,6</text><text x="568" y="302.2" font-size="11.5" text-anchor="end" fill="#222" textLength="15.0" lengthAdjust="spacingAndGlyphs">0,7</text><text x="568" y="277.3" font-size="11.5" text-anchor="end" fill="#222" textLength="15.0" lengthAdjust="spacingAndGlyphs">0,8</text><text x="568" y="252.4" font-size="11.5" text-anchor="end" fill="#222" textLength="15.0" lengthAdjust="spacingAndGlyphs">0,9</text><text x="568" y="227.5" font-size="11.5" text-anchor="end" fill="#222" textLength="15.0" lengthAdjust="spacingAndGlyphs">1,0</text><text x="595.7" y="489" font-size="11.5" text-anchor="middle" fill="#222" textLength="11.4" lengthAdjust="spacingAndGlyphs">63</text><text x="661.4" y="489" font-size="11.5" text-anchor="middle" fill="#222" textLength="17.1" lengthAdjust="spacingAndGlyphs">125</text><text x="727.2" y="489" font-size="11.5" text-anchor="middle" fill="#222" textLength="17.1" lengthAdjust="spacingAndGlyphs">250</text><text x="793.0" y="489" font-size="11.5" text-anchor="middle" fill="#222" textLength="17.1" lengthAdjust="spacingAndGlyphs">500</text><text x="858.8" y="489" font-size="11.5" text-anchor="middle" fill="#222" textLength="10.8" lengthAdjust="spacingAndGlyphs">1k</text><text x="924.6" y="489" font-size="11.5" text-anchor="middle" fill="#222" textLength="10.8" lengthAdjust="spacingAndGlyphs">2k</text><text x="990.3" y="489" font-size="11.5" text-anchor="middle" fill="#222" textLength="10.8" lengthAdjust="spacingAndGlyphs">4k</text><text x="792.5" y="501" font-size="11" text-anchor="middle" fill="#111" textLength="65.3" lengthAdjust="spacingAndGlyphs">Frequency [Hz]</text><text x="792" y="220" font-size="11" text-anchor="middle" fill="#111" textLength="94.0" lengthAdjust="spacingAndGlyphs">Absorption Coefficient</text><text x="0" y="0" font-size="11" text-anchor="middle" fill="#111" textLength="94.0" lengthAdjust="spacingAndGlyphs" transform="translate(547.500,348) rotate(-90)">Absorption Coefficient</text><rect x="583.500" y="232.500" width="129" height="52.500" fill="#fff" stroke="#222" stroke-width="1.200"/><rect x="590" y="239" width="4" height="4" fill="#c77ae0"/><text x="598" y="244" font-size="9" text-anchor="start" fill="#000" textLength="101.4" lengthAdjust="spacingAndGlyphs">Slotted Helmholtz Absorber</text><rect x="590" y="250" width="4" height="4" fill="#e0202a"/><text x="598" y="255" font-size="9" text-anchor="start" fill="#000" textLength="74.4" lengthAdjust="spacingAndGlyphs">Microperforated Foil</text><rect x="590" y="261" width="4" height="4" fill="#1f7a2a"/><text x="598" y="266" font-size="9" text-anchor="start" fill="#000" textLength="83.3" lengthAdjust="spacingAndGlyphs">Foil Covered Absorber</text><rect x="590" y="272" width="4" height="4" fill="#1a1ac8"/><text x="598" y="277" font-size="9" text-anchor="start" fill="#000" textLength="57.2" lengthAdjust="spacingAndGlyphs">Panel Absorber</text></svg>
<div class="a in" style="left:536px;top:514px;width:54px"><span>0,00</span></div><div class="a btn" style="left:592px;top:513px;width:37px"><span style="display:inline-block;transform:scaleX(.89)"><svg width="26" height="15" viewBox="0 0 26 15" style="vertical-align:top;margin-top:1px"><text x="13" y="7" font-size="8" font-weight="bold" text-anchor="middle" fill="#555" font-family="Liberation Sans, sans-serif">Y</text><path d="M5 10.500h16M8 8l-3 2.500 3 2.500M18 8l3 2.500-3 2.500M13 8v5" stroke="#8a8a8a" stroke-width="1.100" fill="none"/></svg></span></div><div class="a in" style="left:631px;top:514px;width:54px"><span>1,00</span></div><div class="a btn" style="left:687px;top:513px;width:33px"><span style="display:inline-block;transform:scaleX(.89)">Fit</span></div><div class="a in" style="left:723px;top:514px;width:54px"><span>50</span></div><div class="a btn" style="left:780px;top:513px;width:36px"><span style="display:inline-block;transform:scaleX(.89)"><svg width="26" height="15" viewBox="0 0 26 15" style="vertical-align:top;margin-top:1px"><text x="13" y="7" font-size="8" font-weight="bold" text-anchor="middle" fill="#555" font-family="Liberation Sans, sans-serif">X</text><path d="M5 10.500h16M8 8l-3 2.500 3 2.500M18 8l3 2.500-3 2.500M13 8v5" stroke="#8a8a8a" stroke-width="1.100" fill="none"/></svg></span></div><div class="a in" style="left:818px;top:514px;width:55px"><span>5000</span></div><div class="a" style="left:975px;top:513px;width:19px;height:19px;border:1px solid #73859f;border-radius:3px;background:#d3d1c7;box-shadow:inset 0 0 0 1px #bfc4c8"><svg width="17" height="17" viewBox="0 0 17 17"><path d="M2.500 13.500H14.500" stroke="#9a9a96" stroke-width="1.200" fill="none"/><path d="M2.500 13.500C6 13 6.500 3.500 9.500 3.500H14.500" stroke="#8a8a86" stroke-width="1.700" fill="none"/><path d="M5.500 13C8.500 12.500 9 7.500 14.500 7M7 13.500C9.500 13 10.500 10.500 14.500 10.500" stroke="#a9a9a4" stroke-width="1" fill="none"/></svg></div><div class="a" style="left:997px;top:513px;width:19px;height:19px;border:1px solid #73859f;border-radius:3px;background:#f3f2ec;box-shadow:inset 0 0 0 1px #d6dae0"><svg width="17" height="17" viewBox="0 0 17 17"><path d="M5.500 2.500v12M11.500 2.500v12" stroke="#aeb1bc" stroke-width="1.100" fill="none"/><path d="M3 5.500h5M9 5.500h5M5.500 3v4M11.500 3v4" stroke="#6a6e80" stroke-width="1.200" fill="none"/></svg></div><div class="a" style="left:997px;top:535px;width:19px;height:19px;border:1px solid #73859f;border-radius:3px;background:#f6f5f0;box-shadow:inset 0 0 0 1px #d6dae0"><svg width="17" height="17" viewBox="0 0 17 17"><path d="M3.500 8.500l5-4.500 5 4.500" stroke="#4a4a48" stroke-width="1.800" fill="none"/><path d="M3.500 13l5-4.500 5 4.500" stroke="#5a5a58" stroke-width="1.800" fill="none"/></svg></div><div class="a" style="left:536px;top:544px;width:455px;height:1px;background:#cfccbc"></div><div class="a" style="left:536px;top:545px;width:455px;height:1px;background:#f8f7f0"></div>
<div class="a gb" style="left:536px;top:569px;width:163px;height:135px"></div><div class="a gl" style="left:541px;top:563px">Structures</div><div class="a gb" style="left:704px;top:569px;width:136px;height:135px"></div><div class="a gl" style="left:710px;top:563px">Data</div><div class="a gb" style="left:846px;top:569px;width:171px;height:84px"></div><div class="a gl" style="left:852px;top:563px">Direction of Incidence</div><div class="a gb" style="left:846px;top:664px;width:171px;height:40px"></div><div class="a gl" style="left:852px;top:658px">Smoothing</div><div class="a" style="left:541px;top:585px;width:152px;height:113px;background:#fff;border:1px solid #a2b3d0"></div><div class="a ck" style="left:543px;top:587.0px"><svg class="a" style="left:0;top:0" width="10" height="10" viewBox="0 0 10 10"><path d="M2 4.500l2.500 2.500 4-4.500" stroke="#2a9a2a" stroke-width="1.800" fill="none"/></svg></div><div class="t" style="left:559px;top:587.0px;transform:scaleX(.868)">Slotted Helmholtz Absorber</div><div class="a ck" style="left:543px;top:600.7px"><svg class="a" style="left:0;top:0" width="10" height="10" viewBox="0 0 10 10"><path d="M2 4.500l2.500 2.500 4-4.500" stroke="#2a9a2a" stroke-width="1.800" fill="none"/></svg></div><div class="t" style="left:559px;top:600.7px;transform:scaleX(.868)">Microperforated Foil</div><div class="a ck" style="left:543px;top:614.4px"><svg class="a" style="left:0;top:0" width="10" height="10" viewBox="0 0 10 10"><path d="M2 4.500l2.500 2.500 4-4.500" stroke="#2a9a2a" stroke-width="1.800" fill="none"/></svg></div><div class="t" style="left:559px;top:614.4px;transform:scaleX(.868)">Foil Covered Absorber</div><div class="a ck" style="left:543px;top:628.1px"><svg class="a" style="left:0;top:0" width="10" height="10" viewBox="0 0 10 10"><path d="M2 4.500l2.500 2.500 4-4.500" stroke="#2a9a2a" stroke-width="1.800" fill="none"/></svg></div><div class="t" style="left:559px;top:628.1px;transform:scaleX(.868)">Panel Absorber</div><div class="a rd on" style="left:710px;top:583px"></div><div class="t" style="left:726px;top:583px">Absorption Coefficient</div><div class="a rd" style="left:710px;top:604px"></div><div class="t" style="left:726px;top:604px">Reflection Coefficient</div><div class="a rd" style="left:710px;top:625px"></div><div class="t" style="left:726px;top:625px">Transmission Loss</div><div class="a rd" style="left:710px;top:646px"></div><div class="t" style="left:726px;top:646px">Input Impedance</div><div class="a rd" style="left:710px;top:667px"></div><div class="t" style="left:726px;top:667px">Reflection Factor</div><div class="a rd" style="left:710px;top:688px"></div><div class="t" style="left:726px;top:688px">Transmission Factor</div><div class="a rd on" style="left:851px;top:582px"></div><div class="t" style="left:867px;top:582px">Diffuse Field</div><div class="a rd" style="left:851px;top:603px"></div><div class="t" style="left:867px;top:603px">Unidirectional</div><div class="t" style="left:871px;top:627px">Angle [°]:</div><div class="a" style="left:952px;top:624px;width:59px;height:19px;border:1px solid #b8c4d8;background:#ebe9dd"><div class="t" style="right:17px;top:3px;color:#a9a799">25</div><svg class="a" style="right:3px;top:3px" width="9" height="11" viewBox="0 0 9 11"><path d="M2 4l2.500-2.500L7 4M2 7l2.500 2.500L7 7" stroke="#c4c8d4" stroke-width="1.300" fill="none"/></svg></div><div class="t" style="left:853px;top:680px">Bandwidth [Octave]:</div><div class="a" style="left:952px;top:675px;width:59px;height:20px;border:1px solid #8aa0c8;background:#fff"><div class="t" style="left:4px;top:3px">1/1</div><div class="a" style="right:1px;top:1px;width:15px;height:16px;background:#c5d4f8;border-radius:2px"></div><svg class="a" style="right:3px;top:5px" width="10" height="8" viewBox="0 0 10 8"><path d="M1.500 2L5 5.500 8.500 2" fill="none" stroke="#3b5fc4" stroke-width="1.800"/></svg></div>
<div class="a" style="left:8px;top:707px;width:1012px;height:1px;background:#b5b29f"></div><div class="a" style="left:527px;top:52px;width:4px;height:655px;background:#f3f2ea"></div><div class="a" style="left:11px;top:711px;width:243px;height:19px;border:1px solid #c5c2b2;border-bottom:none;border-radius:2px 2px 0 0;background:#efede2"></div><svg class="a" style="left:14px;top:713px" width="12" height="14" viewBox="0 0 12 14"><path d="M1.500 1.500h6l3 3v8h-9z" fill="#fafafa" stroke="#b4b4b4"/><path d="M3.500 5.500h5M3.500 7.500h5M3.500 9.500h5" stroke="#c9c9c9"/></svg><div class="t" style="left:31px;top:714px;color:#8c8a80">Structure Properties - Slotted Helmholtz Absorber</div><div class="a" style="left:8px;top:729px;width:1012px;height:1px;background:#b5b29f"></div><div class="a" style="left:8px;top:730px;width:1012px;height:18px;background:linear-gradient(#e6e3d2,#efecdf 30%,#f1efe4)"></div><svg class="a" style="left:1006px;top:735px" width="13" height="13" viewBox="0 0 13 13"><path d="M10 2h2v2h-2zM6 6h2v2H6zM10 6h2v2h-2zM2 10h2v2H2zM6 10h2v2H6zM10 10h2v2h-2z" fill="#b8b5a2"/></svg>
</div>
</body></html>
